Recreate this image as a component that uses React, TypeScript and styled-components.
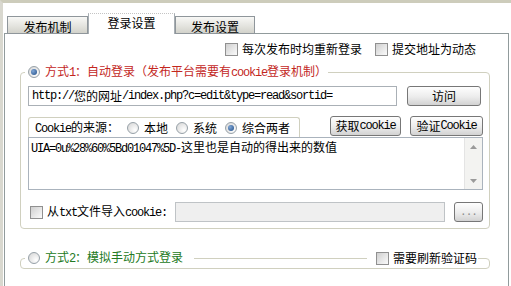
import React from 'react'
import styled, { createGlobalStyle, css } from 'styled-components'

const GlobalStyle = createGlobalStyle`
  html, body {
    margin: 0;
    padding: 0;
    background: #fff;
  }
  body {
    font-family: "Noto Sans CJK SC", "Liberation Sans", sans-serif;
    font-size: 12px;
    color: #000;
  }
`

const Mono = styled.span`
  font-family: "Liberation Mono", "Noto Sans CJK SC", monospace;
  letter-spacing: -1.2px;
`

const Window = styled.div`
  width: 511px;
  height: 286px;
  box-sizing: border-box;
  border-top: 3px solid #cdccbb;
  border-left: 3px solid #d9d8cf;
  background: #fff;
  overflow: hidden;
  display: flex;
  flex-direction: column;
`

const TabStrip = styled.div`
  display: flex;
  align-items: flex-end;
  height: 21px;
  margin: 10px 0 -1px;
  padding-left: 4px;
  position: relative;
  z-index: 1;
`

const Tab = styled.div<{ $active?: boolean; $w: number }>`
  box-sizing: border-box;
  width: ${p => p.$w}px;
  display: flex;
  justify-content: center;
  align-items: center;
  line-height: 14px;
  ${p =>
    p.$active
      ? css`
          height: 21px;
          background: #fff;
          border: 1px solid #a7aeb3;
          border-top: 1px dotted #c4c4c4;
          border-bottom: none;
          padding-bottom: 2px;
        `
      : css`
          height: 18px;
          padding-top: 3px;
          background: linear-gradient(#f8f8f6, #e4e4df 55%, #d2d2cb);
          border: 1px solid #8f969b;
        `}
`

const Panel = styled.div`
  flex: 1;
  width: 505px;
  margin-left: 1px;
  box-sizing: border-box;
  border: 1px solid #919b9c;
  border-bottom: none;
  display: flex;
  flex-direction: column;
`

const TopOptions = styled.div`
  display: flex;
  justify-content: flex-end;
  gap: 13px;
  height: 14px;
  margin-top: 8px;
  padding-right: 32px;
`

const Option = styled.label`
  display: flex;
  align-items: center;
  gap: 4px;
  line-height: 14px;
  color: #000;
  white-space: nowrap;
`

const Check = styled.span`
  width: 13px;
  height: 13px;
  box-sizing: border-box;
  flex: none;
  border: 1px solid #909090;
  background: linear-gradient(135deg, #cfcfcf, #eeeeee 70%, #fafafa);
`

const Radio = styled.span<{ $checked?: boolean }>`
  width: 12px;
  height: 12px;
  box-sizing: border-box;
  flex: none;
  border-radius: 50%;
  border: 1px solid #97a1a8;
  background: radial-gradient(circle at 70% 70%, #ffffff, #d3d3d3);
  display: flex;
  align-items: center;
  justify-content: center;

  &::after {
    content: '';
    display: ${p => (p.$checked ? 'block' : 'none')};
    width: 6px;
    height: 6px;
    border-radius: 50%;
    background: radial-gradient(circle at 35% 35%, #7fa6d6, #1f4c86);
  }
`

const Group = styled.fieldset<{ $gap: number; $compact?: boolean }>`
  margin: ${p => p.$gap}px 18px 0 15px;
  padding: ${p => (p.$compact ? '0 6px 0 7px' : '7px 6px 6px 7px')};
  border: 1px solid #d0d0bf;
  border-radius: 4px;
  min-width: 0;
`

const Legend = styled.legend<{ $w?: number }>`
  display: flex;
  align-items: center;
  gap: 5px;
  height: 14px;
  line-height: 14px;
  padding: 0 1px 0 3px;
  margin-left: -3px;
  box-sizing: border-box;
  ${p => p.$w && `width: ${p.$w}px;`}
  white-space: nowrap;
`

const LegendText = styled.span<{ $color: string }>`
  color: ${p => p.$color};
`

const LegendLine = styled.span`
  flex: 1;
  height: 1px;
  margin: 0 4px 0 6px;
  background: #d0d0bf;
`

const Row = styled.div<{ $top?: number; $gap?: number }>`
  display: flex;
  align-items: center;
  gap: ${p => p.$gap ?? 0}px;
  height: 20px;
  margin-top: ${p => p.$top ?? 0}px;
`

const TextBox = styled.div<{ $w: number; $disabled?: boolean }>`
  width: ${p => p.$w}px;
  height: 20px;
  box-sizing: border-box;
  border: 1px solid ${p => (p.$disabled ? '#bfc3c6' : '#aab0b6')};
  background: ${p => (p.$disabled ? '#efefef' : '#fff')};
  padding: 0 3px;
  display: flex;
  align-items: center;
  white-space: nowrap;
  overflow: hidden;
  line-height: 14px;
`

const Button = styled.div<{ $w: number }>`
  width: ${p => p.$w}px;
  height: 20px;
  box-sizing: border-box;
  border: 1px solid #777;
  border-radius: 3px;
  background: linear-gradient(#fefefe, #ececec 55%, #d2d2d2);
  display: flex;
  align-items: center;
  justify-content: center;
  line-height: 14px;
  white-space: nowrap;
  flex: none;
`

const Dots = styled.span`
  color: #8a8a8a;
  font-family: "Liberation Mono", monospace;
  letter-spacing: -1px;
  font-size: 11px;
`

const SourceRow = styled.div`
  display: flex;
  align-items: flex-end;
  height: 21px;
  margin-top: 10px;
`

const SourceBox = styled.div`
  width: 272px;
  height: 20px;
  box-sizing: border-box;
  border: 1px solid #d0d0bf;
  border-bottom: none;
  border-radius: 3px 3px 0 0;
  padding-left: 6px;
  display: flex;
  align-items: center;
  gap: 8px;
  line-height: 14px;
  white-space: nowrap;
`

const RadioItem = styled.span`
  display: flex;
  align-items: center;
  gap: 5px;
`

const SourceButtons = styled.div`
  display: flex;
  gap: 9px;
  margin-left: auto;
  margin-bottom: 1px;
`

const Memo = styled.div`
  height: 53px;
  box-sizing: border-box;
  border: 1px solid #aab3bd;
  display: flex;
`

const MemoText = styled.div`
  flex: 1;
  padding: 2px 2px 0;
  line-height: 14px;
  white-space: nowrap;
  overflow: hidden;
`

const ScrollBar = styled.div`
  width: 17px;
  background: #f3f3f1;
  border-left: 1px solid #e4e4e4;
  display: flex;
  flex-direction: column;
  justify-content: space-between;
  align-items: center;
  padding: 7px 0 6px;
`

const Arrow = ({ down }: { down?: boolean }) => (
  <svg width="7" height="4" viewBox="0 0 7 4">
    <path d={down ? 'M0 0H7L3.5 4Z' : 'M0 4H7L3.5 0Z'} fill="#9a9a9a" />
  </svg>
)

const ImportLabel = styled.label`
  display: flex;
  align-items: center;
  gap: 4px;
  margin-left: 2px;
  line-height: 14px;
  white-space: nowrap;
`

const FileBox = styled(TextBox)`
  margin-left: auto;
  margin-right: 9px;
`

const EmptyBody = styled.div`
  height: 3px;
`

const red = '#c3271e'
const green = '#237a23'

export default function App() {
  return (
    <Window>
      <GlobalStyle />
      <TabStrip>
        <Tab $w={81}>发布机制</Tab>
        <Tab $w={87} $active>登录设置</Tab>
        <Tab $w={80}>发布设置</Tab>
      </TabStrip>
      <Panel>
        <TopOptions>
          <Option>
            <Check />
            每次发布时均重新登录
          </Option>
          <Option>
            <Check />
            提交地址为动态
          </Option>
        </TopOptions>

        <Group $gap={9}>
          <Legend>
            <Radio $checked />
            <LegendText $color={red}>
              方式<Mono>1</Mono>：自动登录（发布平台需要有<Mono>cookie</Mono>登录机制）
            </LegendText>
          </Legend>
          <Row $gap={10}>
            <TextBox $w={369}>
              <Mono>http://</Mono>您的网址<Mono>/index.php?c=edit&amp;type=read&amp;sortid=</Mono>
            </TextBox>
            <Button $w={74}>访问</Button>
          </Row>
          <SourceRow>
            <SourceBox>
              <span>
                <Mono>Cookie</Mono>的来源：
              </span>
              <RadioItem>
                <Radio />
                本地
              </RadioItem>
              <RadioItem>
                <Radio />
                系统
              </RadioItem>
              <RadioItem>
                <Radio $checked />
                综合两者
              </RadioItem>
            </SourceBox>
            <SourceButtons>
              <Button $w={71}>
                获取<Mono>cookie</Mono>
              </Button>
              <Button $w={73}>
                验证<Mono>Cookie</Mono>
              </Button>
            </SourceButtons>
          </SourceRow>
          <Memo>
            <MemoText>
              <Mono>UIA=0u%28%60%5Bd01047%5D-</Mono>这里也是自动的得出来的数值
            </MemoText>
            <ScrollBar>
              <Arrow />
              <Arrow down />
            </ScrollBar>
          </Memo>
          <Row $top={12}>
            <ImportLabel>
              <Check />
              <span>
                从<Mono>txt</Mono>文件导入<Mono>cookie:</Mono>
              </span>
            </ImportLabel>
            <FileBox $w={270} $disabled />
            <Button $w={29}>
              <Dots>...</Dots>
            </Button>
          </Row>
        </Group>

        <Group $gap={22} $compact>
          <Legend $w={453}>
            <Radio />
            <LegendText $color={green}>
              方式<Mono>2</Mono>：模拟手动方式登录
            </LegendText>
            <LegendLine />
            <Option>
              <Check />
              需要刷新验证码
            </Option>
          </Legend>
          <EmptyBody />
        </Group>
      </Panel>
    </Window>
  )
}
